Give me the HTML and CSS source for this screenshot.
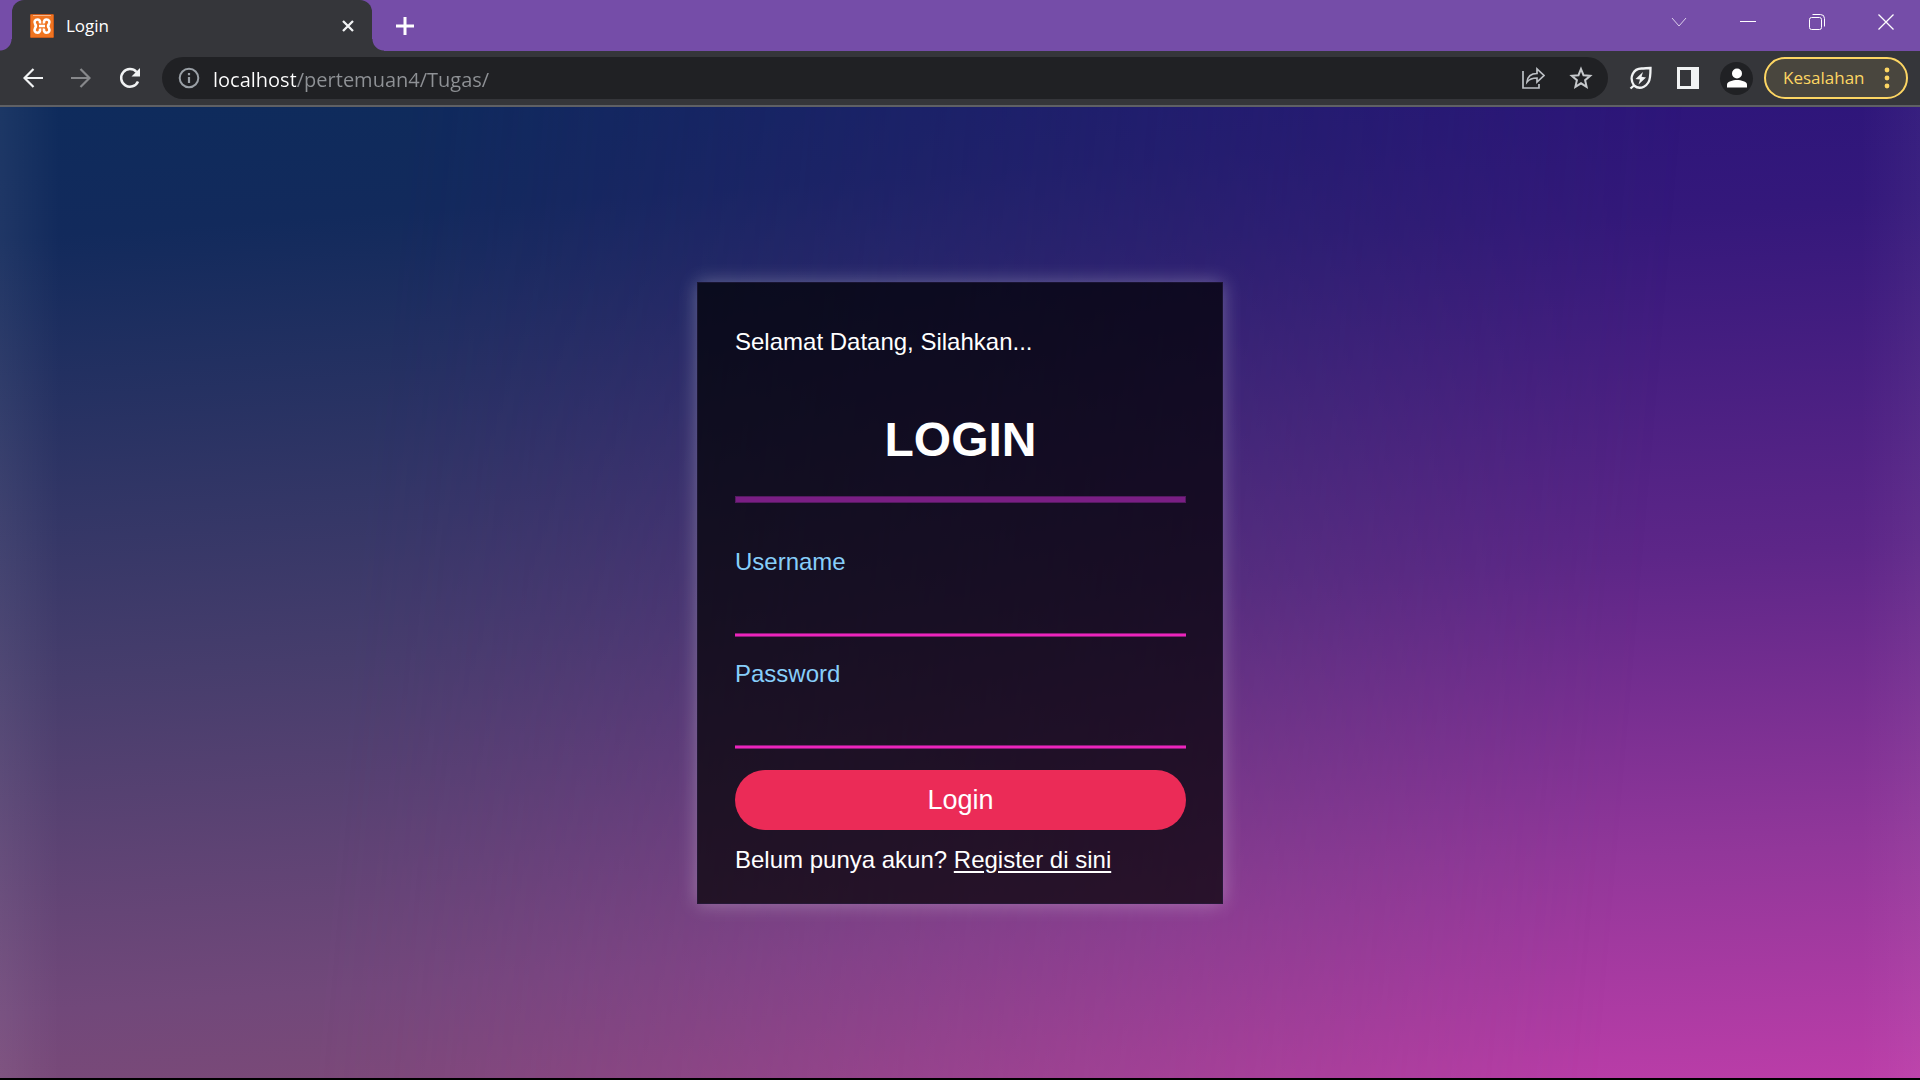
FILE: index.html
```html
<!DOCTYPE html>
<html lang="id">
<head>
<meta charset="utf-8">
<title>Login</title>
<link rel="stylesheet" href="styles.css">
</head>
<body>
<div class="browser">
  <header class="tabstrip">
    <div class="tab">
      <svg class="favicon" viewBox="0 0 24 24" aria-hidden="true"><rect width="24" height="24" rx="2" fill="#f07420"/><rect x=".5" y=".5" width="23" height="23" rx="1" fill="none" stroke="#c85a1b"/><path d="M3 1.500h18" stroke="#f7b68c"/><path d="M10 9.500C10.500 6.500 9 5.500 7.500 5.500 5 5.500 3.800 8 5 9.800 6 11 6 13 5 14.300 3.800 16.500 5 18.700 7.500 18.700 9 18.700 10.500 17.500 10 14.500M14 9.500C13.500 6.500 15 5.500 16.500 5.500 19 5.500 20.200 8 19 9.800 18 11 18 13 19 14.300 20.200 16.500 19 18.700 16.500 18.700 15 18.700 13.500 17.500 14 14.500M9 12h6" fill="none" stroke="#fff" stroke-width="2.600"/></svg>
      <span class="tab-title">Login</span>
      <button class="icon-btn" type="button" aria-label="Tutup tab"><svg width="12" height="12" viewBox="0 0 12 12"><path d="M1 1l10 10M11 1L1 11" stroke="#f1f3f4" stroke-width="2.300"/></svg></button>
    </div>
    <button class="icon-btn new-tab" type="button" aria-label="Tab baru"><svg width="18" height="18" viewBox="0 0 18 18"><path d="M9 0v18M0 9h18" stroke="#fff" stroke-width="3"/></svg></button>
    <div class="window-controls">
      <button class="icon-btn" type="button" aria-label="Cari tab"><svg width="16" height="16" viewBox="0 0 16 16"><path d="M1 4l7 8 7-8" fill="none" stroke="#dccfeb"/></svg></button>
      <button class="icon-btn" type="button" aria-label="Minimalkan"><svg width="16" height="16" viewBox="0 0 16 16"><path d="M0 7.500h16" stroke="#fff"/></svg></button>
      <button class="icon-btn" type="button" aria-label="Pulihkan"><svg width="16" height="16" viewBox="0 0 16 16"><rect x=".5" y="3.500" width="12" height="12" rx="2" fill="none" stroke="#fff"/><path d="M3.500.5h8q4 0 4 4v8" fill="none" stroke="#fff"/></svg></button>
      <button class="icon-btn" type="button" aria-label="Tutup"><svg width="16" height="16" viewBox="0 0 16 16"><path d="M.5.5l15 15M15.500.5l-15 15" stroke="#fff" stroke-width="1.300"/></svg></button>
    </div>
  </header>

  <nav class="toolbar">
    <div class="nav-buttons">
      <button class="icon-btn" type="button" aria-label="Kembali"><svg width="20" height="20" viewBox="0 0 20 20"><path d="M20 10H2M10.500 1L1.500 10l9 9" fill="none" stroke="#f1f3f4" stroke-width="2.200"/></svg></button>
      <button class="icon-btn" type="button" aria-label="Maju"><svg width="20" height="20" viewBox="0 0 20 20"><path d="M0 10h18M9.500 1l9 9-9 9" fill="none" stroke="#87888b" stroke-width="2.200"/></svg></button>
      <button class="icon-btn" type="button" aria-label="Muat ulang"><svg width="22" height="22" viewBox="0 0 22 22"><path d="M19 14.500A8.800 8.800 0 1 1 17.500 5" fill="none" stroke="#f1f3f4" stroke-width="2.500"/><path d="M21 1v8.500h-8.500z" fill="#f1f3f4"/></svg></button>
    </div>
    <div class="omnibox">
      <svg width="22" height="22" viewBox="0 0 22 22" aria-hidden="true"><circle cx="11" cy="11" r="9.300" fill="none" stroke="#9aa0a6" stroke-width="2"/><path d="M11 10v6M11 6v2.300" stroke="#9aa0a6" stroke-width="2.200"/></svg>
      <input class="address" type="text" aria-label="Alamat" value="localhost/pertemuan4/Tugas/">
      <button class="icon-btn" type="button" aria-label="Bagikan"><svg width="24" height="24" viewBox="0 0 24 24"><path d="M2 5v17h16v-4" fill="none" stroke="#bdc1c6" stroke-width="1.700"/><path d="M6 16c.5-5 4-8.500 10-8.500V3l7 6.500-7 6.500v-4c-4.500 0-7.500 1-10 4z" fill="none" stroke="#bdc1c6" stroke-width="1.700"/></svg></button>
      <button class="icon-btn" type="button" aria-label="Tandai halaman"><svg width="24" height="24" viewBox="0 0 24 24"><path d="M12 3l2.500 6.200 6.700.6-5.100 4.400 1.500 6.600L12 17.300l-5.600 3.500 1.500-6.600-5.100-4.400 6.700-.6z" fill="none" stroke="#c6c9cc" stroke-width="2"/></svg></button>
    </div>
    <div class="extensions">
      <button class="icon-btn" type="button" aria-label="Hemat energi"><svg width="24" height="24" viewBox="0 0 24 24"><path d="M5 19.500C-.5 11.500 4.500 2.500 12.500 2.500c3 0 6-.5 9-.5 0 3 0 6-.5 9C20 20.500 11 24.500 5 19.500zM1.500 22.500l3.500-3" fill="none" stroke="#f1f3f4" stroke-width="2.300"/><path d="M14 6l-7.500 7 4.500.5-1.500 5L17 11.500l-4.500-.8z" fill="#f1f3f4"/></svg></button>
      <button class="icon-btn" type="button" aria-label="Panel samping"><svg width="22" height="22" viewBox="0 0 22 22"><rect width="22" height="22" fill="#f1f3f4"/><rect x="3" y="3" width="11" height="16" fill="#35363a"/></svg></button>
      <button class="icon-btn avatar" type="button" aria-label="Profil"><svg width="20" height="20" viewBox="0 0 20 20"><circle cx="10" cy="5.500" r="5" fill="#fff"/><path d="M0 19.500v-3c0-3 6-4.500 10-4.500s10 1.500 10 4.500v3z" fill="#fff"/></svg></button>
    </div>
    <button class="error-pill" type="button">Kesalahan<svg width="6" height="22" viewBox="0 0 6 22" aria-hidden="true"><g fill="#fdd663"><circle cx="3" cy="3" r="2.400"/><circle cx="3" cy="11" r="2.400"/><circle cx="3" cy="19" r="2.400"/></g></svg></button>
  </nav>

  <main class="page">
    <form class="card">
      <p class="greeting">Selamat Datang, Silahkan...</p>
      <h1 class="heading">LOGIN</h1>
      <hr class="rule">
      <div class="fields">
        <div class="field">
          <label for="username">Username</label>
          <input id="username" type="text">
        </div>
        <div class="field">
          <label for="password">Password</label>
          <input id="password" type="password">
        </div>
      </div>
      <button class="submit" type="submit">Login</button>
      <p class="register">Belum punya akun? <a href="#register">Register di sini</a></p>
    </form>
  </main>
</div>
</body>
</html>
```
FILE: styles.css
```css
*, *::before { box-sizing: border-box; }

body {
  margin: 0;
  background: #000;
  color: #fff;
  font-family: "Liberation Sans", Arial, sans-serif;
}

svg { display: block; flex: none; }

.browser {
  display: flex;
  flex-direction: column;
  min-height: 100vh;
  padding-bottom: 2px;
}

.icon-btn {
  display: flex;
  align-items: center;
  justify-content: center;
  padding: 0;
  border: 0;
  background: none;
}

/* Tab strip */
.tabstrip {
  display: flex;
  align-items: center;
  height: 51px;
  padding-left: 12px;
  background: #754da8;
}

.tab {
  position: relative;
  display: flex;
  align-items: center;
  gap: 12px;
  width: 360px;
  height: 51px;
  padding: 0 18px;
  border-radius: 12px 12px 0 0;
  background: #35363a;
}

.tab::before,
.tab::after {
  content: "";
  position: absolute;
  bottom: 0;
  width: 12px;
  height: 12px;
}

.tab::before {
  left: -12px;
  background: radial-gradient(circle at 0 0, transparent 11px, #35363a 12px);
}

.tab::after {
  right: -12px;
  background: radial-gradient(circle at 100% 0, transparent 11px, #35363a 12px);
}

.favicon { width: 24px; height: 24px; }

.tab-title {
  flex: 1;
  font: 17px/24px "Open Sans", "Noto Sans", sans-serif;
}

.new-tab { margin-left: 24px; }

.window-controls {
  display: flex;
  gap: 53px;
  margin: 0 26px 8px auto;
}

/* Toolbar */
.toolbar {
  display: flex;
  align-items: center;
  height: 56px;
  padding: 0 12px 0 23px;
  border-bottom: 2px solid #5f6064;
  background: #35363a;
}

.nav-buttons {
  display: flex;
  gap: 28px;
  margin-right: 21px;
}

.omnibox {
  display: flex;
  flex: 1;
  align-items: center;
  gap: 24px;
  height: 42px;
  padding: 0 15px 0 16px;
  border-radius: 21px;
  background: #202124;
}

.address {
  flex: 1;
  min-width: 0;
  height: 34px;
  margin-left: -11px;
  padding: 2px 0 0;
  border: 0;
  outline: 0;
  background: linear-gradient(90deg, #fff 83px, #8f9296 83px);
  background-clip: text;
  -webkit-background-clip: text;
  color: transparent;
  font: 20px/32px "Open Sans", "Noto Sans", sans-serif;
}

.extensions {
  display: flex;
  align-items: center;
  gap: 24px;
  margin: 0 11px 0 21px;
}

.avatar {
  width: 33px;
  height: 33px;
  margin-left: -3px;
  border-radius: 50%;
  background: #202124;
}

.error-pill {
  display: flex;
  align-items: center;
  justify-content: space-between;
  width: 144px;
  height: 42px;
  padding: 0 16px 0 17px;
  border: 2px solid #fdd663;
  border-radius: 21px;
  background: #49463e;
  color: #fdd663;
  font: 17px/24px "Open Sans", "Noto Sans", sans-serif;
}

/* Page */
.page {
  position: relative;
  display: flex;
  flex: 1;
  align-items: center;
  justify-content: center;
  padding: 40px 20px;
  background: linear-gradient(177deg, #29147a 0%, #34187b 18%, #5d2688 50%, #92379a 78%, #bb3da8 100%);
}

.page::before {
  content: "";
  position: absolute;
  inset: 0;
  background: linear-gradient(176deg, #0e2b5c 0%, #122a5c 12%, #463d6c 52%, #71487a 82%, #854b76 100%);
  mask-image: linear-gradient(95deg, #000 20%, transparent 84%);
}

.page::after {
  content: "";
  position: absolute;
  inset: 0;
  background: linear-gradient(90deg, rgba(255, 255, 255, 0.06), transparent 60px calc(100% - 60px), rgba(255, 255, 255, 0.04));
}

.card {
  position: relative;
  z-index: 1;
  display: flex;
  flex-direction: column;
  width: 526px;
  padding: 45px 36px 29px 37px;
  border: 1px solid rgba(40, 30, 70, 0.5);
  background: rgba(0, 0, 0, 0.7);
  box-shadow: 0 0 18px rgba(255, 255, 255, 0.3);
  font-size: 24px;
  line-height: 28px;
}

.greeting, .register { margin: 0; }

.heading {
  margin: 56px 0 28px;
  font-size: 48px;
  line-height: 56px;
  text-align: center;
}

.rule {
  width: 100%;
  height: 7px;
  margin: 0 0 45px;
  border: 1px solid #541a60;
  background: #7a1e84;
}

.fields {
  display: flex;
  flex-direction: column;
  gap: 23px;
  margin-bottom: 21px;
}

.field {
  display: flex;
  flex-direction: column;
  color: #87cefa;
}

.field input {
  width: 100%;
  height: 61px;
  padding: 0;
  border: 0;
  outline: 0;
  background: linear-gradient(#8a1c78 1px, #ec24bc 1px 3px, #8a1c78 3px) bottom / 100% 4px no-repeat;
  color: #fff;
  font: inherit;
}

.submit {
  height: 60px;
  margin-bottom: 16px;
  border: 0;
  border-radius: 30px;
  background: #eb2b57;
  color: #fff;
  font: 27px/32px "Liberation Sans", Arial, sans-serif;
}

.register a {
  color: inherit;
  text-underline-offset: 3px;
}
```
